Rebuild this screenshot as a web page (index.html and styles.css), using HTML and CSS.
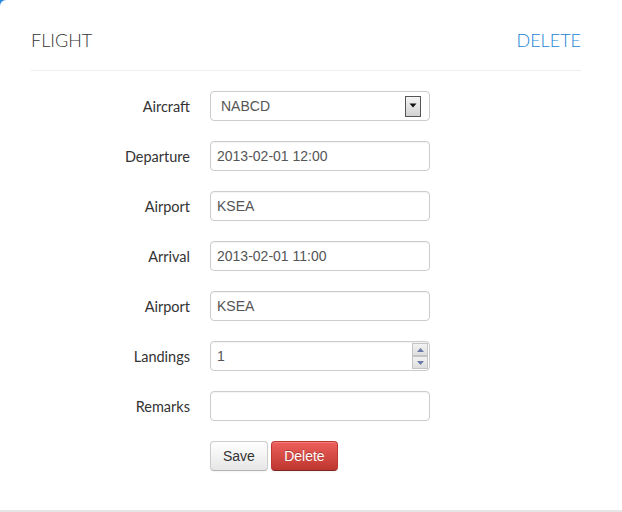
FILE: index.html
```html
<!DOCTYPE html>
<html>
<head>
<meta charset="utf-8">
<link rel="stylesheet" href="styles.css">
</head>
<body>
<div class="frame">
  <div class="card">
    <div class="header">
      <h2 class="title">FLIGHT</h2>
      <a class="link" href="#">DELETE</a>
    </div>
    <div class="rule"></div>
    <form class="form">
      <div class="row">
        <label class="label">Aircraft</label>
        <div class="control">
          <div class="select">
            <span class="select-text">NABCD</span>
            <span class="select-btn">
              <svg width="8" height="5" viewBox="0 0 8 5"><path d="M0.5 0.5 H7.5 L4 4.5 Z" fill="#111"/></svg>
            </span>
          </div>
        </div>
      </div>
      <div class="row">
        <label class="label">Departure</label>
        <div class="control"><input class="input" type="text" value="2013-02-01 12:00"></div>
      </div>
      <div class="row">
        <label class="label">Airport</label>
        <div class="control"><input class="input" type="text" value="KSEA"></div>
      </div>
      <div class="row">
        <label class="label">Arrival</label>
        <div class="control"><input class="input" type="text" value="2013-02-01 11:00"></div>
      </div>
      <div class="row">
        <label class="label">Airport</label>
        <div class="control"><input class="input" type="text" value="KSEA"></div>
      </div>
      <div class="row">
        <label class="label">Landings</label>
        <div class="control spin-wrap">
          <input class="input" type="text" value="1">
          <span class="spin">
            <span class="spin-btn"><svg width="7" height="4" viewBox="0 0 7 4"><path d="M0 4 L3.5 0 L7 4 Z" fill="#6a7aa8"/></svg></span>
            <span class="spin-btn"><svg width="7" height="4" viewBox="0 0 7 4"><path d="M0 0 L7 0 L3.5 4 Z" fill="#6a7aa8"/></svg></span>
          </span>
        </div>
      </div>
      <div class="row">
        <label class="label">Remarks</label>
        <div class="control"><input class="input" type="text" value=""></div>
      </div>
      <div class="row">
        <span class="label"></span>
        <div class="control actions">
          <button class="btn" type="button">Save</button>
          <button class="btn btn-danger" type="button">Delete</button>
        </div>
      </div>
    </form>
  </div>
</div>
</body>
</html>
```

FILE: styles.css
```css
html, body {
  margin: 0;
  padding: 0;
  background: #fff;
}

.frame {
  width: 622px;
  height: 510px;
  background: #2a8ae0;
  border-bottom: 2px solid #e6e6e6;
}

.card {
  height: 510px;
  box-sizing: border-box;
  background: #fff;
  border-top-left-radius: 6px;
  padding: 30px 41px 0 30px;
}

.header {
  display: flex;
  justify-content: space-between;
  align-items: baseline;
  margin-bottom: 20px;
}

.title {
  margin: 0 0 0 1px;
  font-family: Lato, sans-serif;
  font-weight: 300;
  font-size: 18px;
  line-height: 20px;
  color: #333;
}

.link {
  font-family: Lato, sans-serif;
  font-weight: 300;
  font-size: 18px;
  line-height: 20px;
  color: #1a84d6;
  text-decoration: none;
}

.rule {
  margin-left: 1px;
  border-top: 1px solid #eee;
  margin-bottom: 20px;
}

.form {
  margin: 0;
}

.row {
  display: flex;
  align-items: center;
  height: 30px;
  margin-bottom: 20px;
}

.label {
  width: 160px;
  margin-right: 20px;
  text-align: right;
  font-family: Lato, sans-serif;
  font-size: 14.5px;
  color: #333;
}

.control {
  width: 220px;
}

.input {
  box-sizing: border-box;
  width: 220px;
  height: 30px;
  margin: 0;
  padding: 4px 6px;
  border: 1px solid #ccc;
  border-radius: 4px;
  font-family: "Liberation Sans", Arial, sans-serif;
  font-size: 14px;
  color: #555;
  background: #fff;
  box-shadow: inset 0 1px 1px rgba(0,0,0,0.05);
  outline: none;
}

.select {
  box-sizing: border-box;
  width: 220px;
  height: 30px;
  border: 1px solid #ccc;
  border-radius: 4px;
  display: flex;
  align-items: center;
  justify-content: space-between;
  padding: 0 8px 0 10px;
  font-family: "Liberation Sans", Arial, sans-serif;
  font-size: 14px;
  color: #555;
}

.select-btn {
  box-sizing: border-box;
  width: 16px;
  height: 21px;
  border: 1px solid #555;
  background: linear-gradient(#f4f4f4, #d2d2d2);
  display: flex;
  justify-content: center;
  padding-top: 6px;
}

.select-btn svg {
  display: block;
}

.spin-wrap {
  position: relative;
}

.spin {
  position: absolute;
  right: 2px;
  top: 2px;
  display: flex;
  flex-direction: column;
}

.spin-btn {
  box-sizing: border-box;
  width: 16px;
  height: 13px;
  border: 1px solid #c4c4c4;
  background: linear-gradient(#f2f2f2, #dedede);
  display: flex;
  align-items: center;
  justify-content: center;
}

.spin-btn svg {
  display: block;
}

.actions {
  display: flex;
  gap: 3px;
}

.btn {
  box-sizing: border-box;
  height: 30px;
  margin: 0;
  padding: 4px 12px;
  font-family: "Liberation Sans", Arial, sans-serif;
  font-size: 14px;
  color: #333;
  border: 1px solid #ccc;
  border-bottom-color: #b3b3b3;
  border-radius: 4px;
  background: linear-gradient(#fff, #e6e6e6);
  box-shadow: inset 0 1px 0 rgba(255,255,255,0.2), 0 1px 2px rgba(0,0,0,0.05);
}

.btn-danger {
  width: 67px;
  color: #fff;
  border-color: #bd362f #bd362f #802420;
  background: linear-gradient(#ee5f5b, #bd362f);
  text-shadow: 0 -1px 0 rgba(0,0,0,0.25);
}
```
